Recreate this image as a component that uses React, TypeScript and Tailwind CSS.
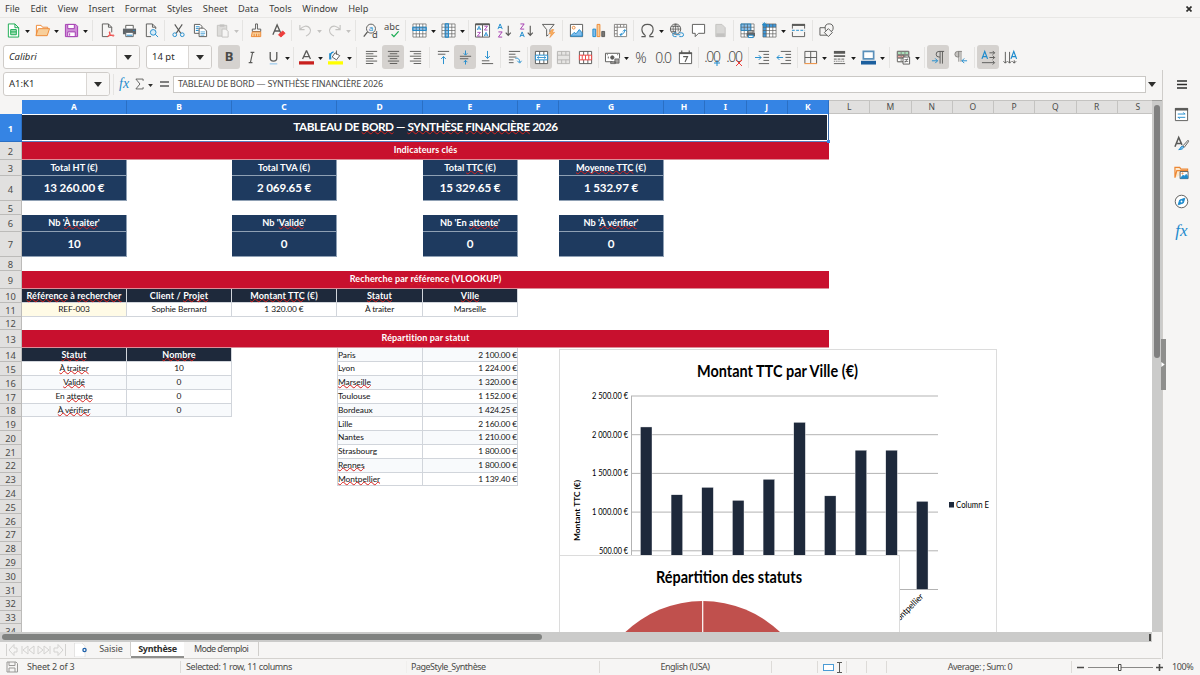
import type { ReactNode } from "react";
import clsx from "clsx";

const DARK = "#5a5a58";
const GREY = "#858380";
const BLUE = "#1e8bcd";
const ORANGE = "#ed8733";
const RED = "#ed3d3b";
const PURPLE = "#a33ab0";
const OFF = "#c3c2c0";

const menus = ["File", "Edit", "View", "Insert", "Format", "Styles", "Sheet", "Data", "Tools", "Window", "Help"];

const page = <path d="M3.5 1.5h6l3 3v10h-9zM9.5 1.5v3h3" />;
const gridBack = <path d="M1 1h14v14H1z" fill="#fff" stroke="none" />;
const gridLines = <path d="M1 1h14v14H1zM1 4.500h14M1 8h14M1 11.500h14M4.500 1v14M8 1v14M11.500 1v14" strokeWidth=".7" />;

// every drawing lives in a 16x16 box, stroked with DARK unless it says otherwise
const icons: Record<string, ReactNode> = {
  new: (
    <>
      <path d="M2.5 1h7l4 4v10h-11zM9.5 1v4h4" stroke="#18ab50" fill="#fff" />
      <path d="M5 7h6v5.500H5zM5 9.500h6" stroke="#18ab50" fill="#a5dfb9" />
    </>
  ),
  open: (
    <>
      <path d="M1.500 13V2.500h5l1.500 2h5.500V6" stroke={ORANGE} fill="#fff" />
      <path d="M1 13.500 3.500 6h12L13 13.500z" stroke={ORANGE} fill="#f8cf9b" />
    </>
  ),
  save: (
    <>
      <path d="M1.500 1.500h11l2 2v11h-13z" stroke={PURPLE} fill="#cf8fd8" />
      <path d="M4 1.500h7v4.500H4zM4 9.500h8v5H4z" stroke={PURPLE} fill="#fff" />
      <path d="M6 11v2.500" stroke={PURPLE} />
    </>
  ),
  pdf: (
    <>
      <path d="M2.500 1h6.500l3.500 3.500v5.500M2.500 1v13.500h6M9 1v3.500h3.500" />
      <path d="M8 15c2-2 3-4 2.500-5.500-.7-.7-1 1 .5 2.500s3.500 2.500 4 1.500-3-.7-7 .7" stroke={RED} />
    </>
  ),
  print: (
    <>
      <path d="M4 6V2.500h8V6" fill="#fff" />
      <path d="M1 6h14v6H1z" fill="#5f6468" stroke="none" />
      <path d="M4 10h8v4.500H4z" fill="#fff" stroke="#5f6468" />
      <path d="M5 13h6M12 8h1.500" stroke={BLUE} />
    </>
  ),
  preview: (
    <>
      <path d="M2.500 1h6.500l3.500 3.500v2M2.500 1v13.500h5M9 1v3.500h3.500" />
      <circle cx="9.800" cy="10" r="3" stroke={BLUE} fill="#d8ecf8" />
      <path d="m12 12 3 3" stroke={BLUE} />
    </>
  ),
  cut: (
    <>
      <path d="M4 1.500 10.500 11M12 1.500 5.500 11" strokeWidth="1.200" />
      <circle cx="4" cy="12.500" r="2" stroke={BLUE} />
      <circle cx="12" cy="12.500" r="2" stroke={BLUE} />
    </>
  ),
  copy: (
    <>
      <path d="M1.500 1.500h6l2 2v7.500h-8z" fill="#fff" />
      <path d="M3 4h4M3 6h3M3 8h3" stroke={BLUE} />
      <path d="M6.500 5.500h5l3 3v6h-8z" fill="#fff" />
      <path d="M8 9.500h5M8 11.300h5M8 13h4" stroke={BLUE} strokeWidth=".7" />
    </>
  ),
  paste: (
    <>
      <path d="M2.500 2.500h10V14h-10z" stroke={OFF} fill="#dddcda" />
      <path d="M5 1.500h5v2.500H5z" fill={OFF} stroke="none" />
      <path d="M7.500 6.500h4l2.500 2.500v6h-6.500z" stroke={OFF} fill="#f6f5f4" />
    </>
  ),
  clone: (
    <>
      <path d="M7 1h2v5.500h3.500V9h-9V6.500H7z" fill="#fff" />
      <path d="M3.500 9.500h9v5h-10z" stroke={ORANGE} fill="#f8cf9b" />
      <path d="M5.500 11.500v3M8 11.500v3M10.500 11.500v3" stroke={ORANGE} />
    </>
  ),
  clear: (
    <>
      <path d="M2 12.500 6.500 2l4 9M4 8.500h5" strokeWidth="1.400" />
      <path d="m8 12.500 4.500-4 2.500 2.500-4.500 4z" fill={RED} stroke={RED} />
    </>
  ),
  undo: <path d="M2 2v5h5M2 7c3-4 8-5 10.500-1.500S12 12 8.500 14" stroke={OFF} strokeWidth="1.200" />,
  redo: <path d="M14 2v5H9M14 7c-3-4-8-5-10.500-1.500S4 12 7.500 14" stroke={OFF} strokeWidth="1.200" />,
  find: (
    <>
      <circle cx="8.500" cy="6" r="4.800" />
      <path d="m4.800 9.500-4 5" strokeWidth="1.400" />
      <text x="6" y="8.500" fontSize="8.500" fill={BLUE} stroke="none" fontFamily="Noto Sans">a</text>
      <text x="9.500" y="16" fontSize="10" fill="#4a4a48" stroke="none" fontFamily="Noto Sans">d</text>
    </>
  ),
  spell: (
    <>
      <text x="-1" y="7.500" fontSize="10" fill="#4a4a48" stroke="none" fontFamily="Noto Sans">abc</text>
      <path d="m7 12 2.500 2.500 5-5.500" stroke="#18ab50" strokeWidth="1.300" />
    </>
  ),
  row: (
    <>
      {gridBack}
      <path d="M1 4.500h14V8H1z" fill="#83beec" stroke="none" />
      {gridLines}
      <path d="M.700 4.500h14.600V8H.700z" stroke={BLUE} />
    </>
  ),
  col: (
    <>
      {gridBack}
      <path d="M4.500 1H8v14H4.500z" fill="#83beec" stroke="none" />
      {gridLines}
      <path d="M4.500.700H8v14.600H4.500z" stroke={BLUE} />
    </>
  ),
  sort: (
    <>
      <path d="M.500 1h15v14H.500zM8 2v13" fill="#fff" />
      <path d="M.500 1.500h15" strokeWidth="1.800" />
      <path d="m2.300 7.500 2-4 2 4M9.800 14l2-4 2 4M3 6.300h2.600M10.500 12.800h2.600" stroke={BLUE} strokeWidth=".9" />
      <path d="M2.500 10h3.300l-3.300 4h3.300M10 3.500h3.300L10 7.500h3.300" stroke={PURPLE} strokeWidth=".9" />
    </>
  ),
  az: (
    <>
      <path d="m1 6.500 2.300-5.500 2.300 5.500M1.800 4.800h3" stroke={BLUE} />
      <path d="M1.500 9.500h4l-4 5.500h4" stroke={PURPLE} />
      <path d="M12 3v10M9.300 10.300l2.700 3 2.700-3" strokeWidth="1.200" />
    </>
  ),
  za: (
    <>
      <path d="M1.500 1h4l-4 5.500h4" stroke={PURPLE} />
      <path d="m1 15 2.300-5.500L5.600 15M1.800 13.200h3" stroke={BLUE} />
      <path d="M12 3v10M9.300 10.300l2.700 3 2.700-3" strokeWidth="1.200" />
    </>
  ),
  filter: (
    <>
      <path d="M1.500 1.500h12.500L9.500 7v3M1.500 1.500 6 7v7l2-1.500" />
      <path d="m11.500 7-3 4.500h2.500L9.500 15.500l5-5.500h-2.500l1.500-3z" fill="#f8b060" stroke={ORANGE} strokeWidth=".6" />
    </>
  ),
  image: (
    <>
      <path d="M1.500 1.500h13v13h-13z" fill="#fff" />
      <circle cx="5" cy="5" r="1.500" stroke={ORANGE} />
      <path d="m2 13.500 3.500-3.500 2 1.500L11 7l3 3.500v3.500H2z" fill="#83beec" stroke={BLUE} />
    </>
  ),
  chart: (
    <>
      <path d="M2 6.500h3v8H2z" fill="#83beec" stroke={BLUE} />
      <path d="M6.500 1.500h3v13h-3z" fill="#f8cf9b" stroke={ORANGE} />
      <path d="M11.500 9h3v5.500h-3z" fill="#797774" />
    </>
  ),
  pivot: (
    <>
      <path d="M1.500 1.500h13v13h-13z" stroke={GREY} fill="#fff" />
      <path d="M1.500 4.500h13M4.500 1.500v13M8 1.500v3M11.500 1.500v3M1.500 8h3M1.500 11.500h3" stroke={GREY} />
      <path d="M7.500 12.500c3 0 5-2 5-5M10.500 9l2-2 2 2M9.500 10.500l-2 2 2 2" stroke={BLUE} />
    </>
  ),
  omega: <path d="M1.500 14.500h4v-1.300C3 11.500 2 9.500 2 7c0-3.500 2.500-5.500 6-5.500S14 3.500 14 7c0 2.500-1 4.500-3.500 6.200v1.300h4" strokeWidth="1.200" />,
  link: (
    <>
      <circle cx="7" cy="6.500" r="5.500" />
      <path d="M7 1v10M1.500 6.500h11M2.500 3.800h9M2.500 9h5M7 1c-3.500 3-3.500 7.500 0 11M7 1c2.800 2.500 3.300 5 2.700 8" strokeWidth=".8" />
      <path d="M8 10.500H6a2 2 0 0 0 0 4h2M11 10.500h2.500a2 2 0 0 1 0 4H11M7.500 12.500h4.500" stroke={BLUE} />
    </>
  ),
  comment: <path d="M1.500 1.500h13v9.500H8l-3.500 3.500V11h-3z" fill="#fff" />,
  header: (
    <>
      <path d="M3 1.500h6.500l3.500 3.500v9.500H3z" stroke={OFF} fill="#d8d7d5" />
      <path d="M3.500 11h9v3.500h-9z" stroke="none" fill={OFF} />
    </>
  ),
  printArea: (
    <>
      {gridBack}
      <path d="M1 1h10.500v7H1z" fill="#83beec" stroke="none" />
      {gridLines}
      <path d="M1 1h10.500v7H1z" stroke={BLUE} strokeWidth=".8" />
      <path d="M8.500 8.500h5.500v2h-5.500z" fill="#fff" />
      <path d="M7 10.500h9v3.500H7z" fill="#5f6468" stroke="none" />
      <path d="M9 13h5v2.500H9z" fill="#fff" stroke={BLUE} />
    </>
  ),
  freeze: (
    <>
      {gridBack}
      <path d="M1 1h14v3.500H4.500V15H1z" fill="#3e9be0" stroke="none" />
      {gridLines}
      <path d="M2.500-1v5M0 1.500h5M.800-.200l3.400 3.400M4.200-.200.800 3.200" stroke={BLUE} strokeWidth=".8" />
    </>
  ),
  split: (
    <>
      <path d="M1.500 6V2h13v4M1.500 9.500v5h13v-5" />
      <path d="M1 2h14" strokeWidth="2.200" />
      <path d="M1 7.800h14" stroke={BLUE} strokeDasharray="3 1.500" />
    </>
  ),
  shapes: (
    <>
      <path d="M1 5h8v8H1z" />
      <circle cx="10.800" cy="5.200" r="4.300" fill="#f6f5f4" />
      <path d="m10 6 4.200 4.200-4.200 4.300-4.300-4.300z" fill="#f6f5f4" />
    </>
  ),
  italic: <path d="M7 2.500h4M5 13.500h4M9.200 2.500 6.800 13.500" strokeWidth="1.200" />,
  underline: (
    <>
      <path d="M4.500 2v6.500c0 4.500 7 4.500 7 0V2" strokeWidth="1.400" />
      <path d="M4 14.800h8" stroke="#83beec" />
    </>
  ),
  fontColor: (
    <>
      <path d="m3.800 9.500 4-8.500h.4l4 8.500M5.200 7h5.600" strokeWidth="1.400" />
      <path d="M0 12h16v3.500H0z" fill="#c9211e" stroke="none" />
    </>
  ),
  highlight: (
    <>
      <path d="m7.500 3 5 3-3.500 4.500-4.500-3zM9 .500v4.500" fill="#fff" />
      <path d="M3 9.500C2 6 2.500 2.500 6 2M2 3.500v6h1.500" stroke={BLUE} strokeWidth="1.500" />
      <path d="M0 12h16v3.500H0z" fill="#ffff00" stroke="none" />
    </>
  ),
  alignLeft: <path d="M2 1.500h12M2 4h8M2 6.600h12M2 9.200h8M2 11.800h12M2 14.400h8" />,
  alignCenter: <path d="M2 1.500h12M4 4h8M2 6.600h12M4 9.200h8M2 11.800h12M4 14.400h8" />,
  alignRight: <path d="M2 1.500h12M6 4h8M2 6.600h12M6 9.200h8M2 11.800h12M6 14.400h8" />,
  alignTop: (
    <>
      <path d="M2 1.500h12M2 4.500h8" />
      <path d="M8 15V7M5.500 9.500 8 7l2.500 2.500" stroke={BLUE} />
    </>
  ),
  alignMiddle: (
    <>
      <path d="M2 6.700h12M2 9.300h9" />
      <path d="M8 .500V5M6 3.500l2 2 2-2M8 15.500V11M6 13l2-2 2 2" stroke={BLUE} />
    </>
  ),
  alignBottom: (
    <>
      <path d="M2 14.500h12M2 11.500h8" />
      <path d="M8 1v8M5.500 6.500 8 9l2.500-2.500" stroke={BLUE} />
    </>
  ),
  wrap: (
    <>
      <path d="M2 1.500h12M2 4.500h7M2 7.500h8M2 10.500h5M2 13.500h5" />
      <path d="M9 9c3-1 4.500 1 4.500 4M11 11.500l2.500 2.500 2-2.500" stroke={BLUE} />
    </>
  ),
  merge: (
    <>
      <path d="M1.500 1.500h13v13h-13zM6 1.500v4M10.500 1.500v4M6 10.500v4M10.500 10.500v4" fill="#fff" />
      <path d="M1.500 5.500h13v5h-13z" fill="#fff" stroke={BLUE} />
      <path d="M3.500 8h9M5 6.800 3.500 8 5 9.200M11 6.800 12.500 8 11 9.200" stroke={BLUE} strokeWidth=".9" />
    </>
  ),
  unmerge: <path d="M1.500 1.500h13v13h-13zM1.500 5.500h13M1.500 10.500h13M6 1.500v4M10.500 1.500v4M6 10.500v4M10.500 10.500v4" stroke="#b5b4b2" fill="#e6e5e3" />,
  splitCells: (
    <>
      <path d="M1.500 1.500h13v13h-13zM6 1.500v4M10.500 1.500v4M6 10.500v4M10.500 10.500v4" fill="#fff" />
      <path d="M1.500 5.500h13v5h-13zM4.500 5.500v5M8 5.500v5M11.500 5.500v5" stroke={RED} fill="#fff" />
    </>
  ),
  currency: (
    <>
      <path d="M8 12.500H.500v-9h15V9" fill="#fff" />
      <circle cx="7.800" cy="8" r="1.800" fill={DARK} />
      <path d="M3.500 7v2M2 5h1M13 5h1" />
      <path d="M10.500 9.500h4.500v4.500h-4.500zM6 12.500h5v2H6z" fill="#a3a19f" strokeWidth=".8" />
    </>
  ),
  date: (
    <>
      <path d="M1.500 3h13v11.500h-13z" fill="#fff" />
      <path d="M1 3.500h14" strokeWidth="1.800" />
      <path d="M4 .500v3M12 .500v3M5.500 7h4.700L7.500 12.700" strokeWidth="1.200" />
    </>
  ),
  indent: (
    <>
      <path d="M4 1.500h11M9 4.700h6M9 7.900h6M9 11.100h6M4 14.500h11" />
      <path d="M0 8h6.500M4 5.500 6.500 8 4 10.500" stroke={BLUE} />
    </>
  ),
  outdent: (
    <>
      <path d="M4 1.500h11M9 4.700h6M9 7.900h6M9 11.100h6M4 14.500h11" />
      <path d="M6.500 8H0M2.500 5.500 0 8l2.500 2.500" stroke={BLUE} />
    </>
  ),
  border: (
    <>
      <path d="M2 14V1.500h12.500V14M8.200 1.500v12.500M2 8h12.500" />
      <path d="M1.500 14.500h13.500" stroke={ORANGE} />
    </>
  ),
  borderStyle: (
    <>
      <path d="M2 2.500h12" strokeWidth="3" />
      <path d="M2 6.500h12" strokeWidth="1.800" />
      <path d="M2 9.700h12" strokeDasharray="3 1" />
      <path d="M2 12h12" strokeDasharray="1 1" />
      <path d="M2 14.500h12" />
    </>
  ),
  borderColor: (
    <>
      <path d="M2.500 1.500h11v8h-11z" stroke="#5a90ba" strokeWidth="1.800" fill="#fff" />
      <path d="M0 11.500h16v4H0z" fill="#1c5f9e" stroke="none" />
    </>
  ),
  conditional: (
    <>
      <path d="M1.500 1.500h12v11h-12z" fill="#fff" />
      <path d="M1.500 1.500h12v4h-12z" fill="#a9dfb9" />
      <path d="M1.500 5.500h7v3h-7z" fill="#f2a5a3" />
      <path d="M1.500 1.500h12v11h-12zM1.500 5h12M1.500 8.500h12M5.500 1.500v11M9.500 1.500v11" stroke={GREY} />
      <path d="M7.500 7.500h7v7.500h-7z" fill="#fff" />
      <path d="M9 10.200h4M9 12.200h4M12.500 9l-3 4.500" strokeWidth=".8" />
    </>
  ),
  ltr: (
    <>
      <path d="M14 1.500H8.500a3 3 0 0 0 0 6h1M9.700 1.500v13M12.200 1.500v13" />
      <path d="M1 11.500h6M4.500 9 7 11.500 4.500 14" stroke={BLUE} />
    </>
  ),
  rtl: (
    <>
      <path d="M9.500 1.500H5a3 3 0 0 0 0 6h1.200V1.500" fill="#c5c3c0" stroke={GREY} />
      <path d="M6.200 1.500v11M8.500 1.500v11" stroke={GREY} />
      <path d="M15 11.500H9.500M12 9l-2.500 2.500L12 14" stroke={BLUE} />
    </>
  ),
  textH: (
    <>
      <path d="M1 9.500 4 1.500l3 8M2 7h4" stroke={BLUE} strokeWidth="1.300" />
      <path d="M9 3h5.500M9 8h5.500M1 13.500h13M12.500 1l2 2-2 2M12.500 6l2 2-2 2M12.500 11.500l2 2-2 2" />
    </>
  ),
  textV: (
    <>
      <path d="m8.500 9.500 3-8 3 8M9.500 7h4" stroke={BLUE} strokeWidth="1.300" />
      <path d="M2.500 2v12M7 2v12M12 11v3M.500 12l2 2 2-2M5 12l2 2 2-2M10 12l2 2 2-2" />
    </>
  ),
  properties: (
    <>
      <path d="M1.500 1.500h13v13h-13z" fill="#fff" />
      <path d="M1 2.500h14" strokeWidth="2.500" />
      <path d="M4 7.500h8M4 11h8M10 5.800l1.500 1.700M6 12.500 4.500 11" stroke={BLUE} />
    </>
  ),
  styles: (
    <>
      <path d="M1 11.500 5 1.500l3.500 8M2.500 8H7" strokeWidth="1.600" />
      <path d="m15 4.500-5.500 6 1.500 1.500L15.500 6z" />
      <path d="M5 14.500c2 0 1.500-3.500 3.800-3.500 2.700.500 1.500 3.500-3.800 3.500z" fill="#83beec" stroke={BLUE} />
    </>
  ),
  gallery: (
    <>
      <path d="M1 13.500v-11h5l1.500 2h7V7M1 13.500 3 6h12" stroke={ORANGE} fill="#fde8cc" strokeWidth="1.300" />
      <path d="M6.500 7h8.500v7.500H6.500z" fill="#fff" />
      <path d="m7 14 2.500-3 1.500 1 2-2 1.500 2v2z" fill={BLUE} stroke={BLUE} />
      <circle cx="9" cy="9" r=".6" stroke={ORANGE} />
    </>
  ),
  navigator: (
    <>
      <circle cx="8" cy="8" r="6.700" fill="#fff" />
      <path d="m11.500 4.500-1.500 5-5.500 2 1.500-5z" fill={BLUE} stroke={BLUE} />
      <circle cx="8" cy="8" r="1" fill="#fff" stroke="none" />
    </>
  ),
};

interface ToolProps {
  id: string;
  menu?: boolean;
  active?: boolean;
  disabled?: boolean;
}

// short-hand: "id" plain, "id▾" with menu, "id!" pressed, "|" separators of growing width
const standardBar = "new▾ open▾ save▾ ||| pdf print preview | cut copy paste▾ | clone clear | undo▾ redo▾ ||| find spell | row▾ col▾ | sort az za filter || image chart pivot | omega▾ link comment header | printArea freeze▾ split || shapes";
const formatBar = "bold! italic underline▾ . fontColor▾ highlight▾ ||| alignLeft alignCenter! alignRight || alignTop alignMiddle! alignBottom | wrap | merge! unmerge splitCells | currency▾ percent number date | addDecimal deleteDecimal || indent outdent . border▾ borderStyle▾ borderColor▾ || conditional▾ || ltr! rtl || textH! textV";

const disabledIds = ["paste", "undo", "redo"];

const Icon = ({ id, className }: { id: string; className?: string }) => (
  <svg viewBox="0 0 16 16" className={clsx("overflow-visible shrink-0", className ?? "w-[15px] h-[15px]")} fill="none" stroke={DARK}>
    {icons[id] ?? page}
  </svg>
);

const Glyph = ({ id }: { id: string }) => {
  switch (id) {
    case "bold":
      return <b className="text-[13px]">B</b>;
    case "percent":
      return <span className="text-[14px] font-light">%</span>;
    case "number":
      return <span className="text-[14px] font-light tracking-[-1.3px]">0.0</span>;
    case "addDecimal":
    case "deleteDecimal":
      return (
        <span className="relative text-[14px] leading-[16px] font-light tracking-[-1.3px]">
          .00
          <svg viewBox="0 0 6 6" className="absolute right-0 -bottom-[1px] w-[6px] h-[6px] overflow-visible" stroke={id === "addDecimal" ? BLUE : RED}>
            <path d={id === "addDecimal" ? "M3 0v6M0 3h6" : "m0 0 6 6M6 0 0 6"} />
          </svg>
        </span>
      );
    default:
      return <Icon id={id} />;
  }
};

const Arrow = ({ className }: { className?: string }) => (
  <svg viewBox="0 0 8 5" className={clsx("shrink-0", className)} fill="currentColor">
    <path d="M0 0h8L4 5z" />
  </svg>
);

const Tool = ({ id, menu, active, disabled }: ToolProps) => (
  <div className="flex items-center shrink-0">
    <div className={clsx("flex w-[22px] h-[24px] items-center justify-center rounded-[3px] text-[#4a4a48]", active && "bg-[#d5d2cf]")}>
      <Glyph id={id} />
    </div>
    {menu && (
      <div className={clsx("w-[7px] flex justify-center", disabled ? "text-[#c3c2c0]" : "text-[#1b1b1a]")}>
        <Arrow className="w-[5px] h-[3px] mt-[2px]" />
      </div>
    )}
  </div>
);

const sepWidths: Record<string, string> = { ".": "w-[4px]", "|": "w-[5px]", "||": "w-[6px]", "|||": "w-[7px]" };

const ToolRow = ({ spec }: { spec: string }) => (
  <>
    {spec.split(" ").map((token, i) => {
      if (sepWidths[token]) {
        return (
          <div key={i} className={clsx("flex justify-center shrink-0", sepWidths[token])}>
            <div className="w-px h-[21px] bg-[#e5e4e2]" />
          </div>
        );
      }
      const id = token.replace(/[▾!]/, "");
      return <Tool key={i} id={id} menu={token.endsWith("▾")} active={token.endsWith("!")} disabled={disabledIds.includes(id)} />;
    })}
  </>
);

const Combo = ({ value, className, arrowClass, italic }: { value: string; className: string; arrowClass: string; italic?: boolean }) => (
  <div className={clsx("flex h-[24px] rounded-[3px] border border-[#cfccc9] bg-white text-[9.5px] text-[#2e2e2c] overflow-hidden shrink-0", className)}>
    <div className={clsx("flex-1 flex items-center pl-[5px] whitespace-nowrap", italic && "italic")}>{value}</div>
    <div className={clsx("flex items-center justify-center border-l border-[#dad7d4] bg-[#f8f7f6]", arrowClass)}>
      <Arrow className="w-[8px] h-[5px]" />
    </div>
  </div>
);

// words between asterisks are unknown to the spell checker
const Spelled = ({ text }: { text: string }) => (
  <span>
    {text.split("*").map((part, i) =>
      i % 2 ? (
        <span key={i} className="underline decoration-wavy decoration-[#d8201c] decoration-[0.7px] underline-offset-[-1px] [text-decoration-skip-ink:none]">
          {part}
        </span>
      ) : (
        part
      )
    )}
  </span>
);

type Kind = "title" | "band" | "kpi" | "kpiValue" | "head" | "body" | "city" | "amount" | "input";

interface Cell {
  col: number;
  row: number;
  span?: number;
  kind: Kind;
  text: string;
  shaded?: boolean;
}

const kindClass: Record<Kind, string> = {
  title: "justify-center bg-[#1e293b] text-white font-bold text-[11.8px] tracking-[-0.46px] pb-[2px] border-y border-white",
  band: "justify-center bg-[#c8102e] text-white font-bold text-[9px] tracking-[0.1px] pb-[2px] border-b border-[#dd8c98]",
  kpi: "justify-center bg-[#1e3a5f] text-white font-bold text-[9.2px] border-r border-b border-[#8fa0b4]",
  kpiValue: "justify-center bg-[#1e3a5f] text-white font-bold text-[11.6px] tracking-[-0.15px] border-r border-b border-[#8fa0b4]",
  head: "justify-center bg-[#1e293b] text-white font-bold text-[9px] tracking-[0.12px] border-r border-b border-[#d1d5db]",
  body: "justify-center text-[#141414] text-[8.4px] tracking-[-0.1px] border-r border-b border-[#d1d5db]",
  input: "justify-center bg-[#fffbe6] text-[#141414] text-[8.4px] tracking-[-0.1px] border-r border-b border-[#d1d5db]",
  city: "justify-start text-[#141414] text-[8.4px] tracking-[-0.05px] border-x border-b border-[#d1d5db]",
  amount: "justify-end text-[#141414] text-[8.4px] tracking-[-0.15px] border-r border-b border-[#d1d5db]",
};

const kpis = [
  { col: 1, top: "Total HT (€)", value: "13 260.00 €", bottom: "Nb '*À traiter*'", count: "10" },
  { col: 3, top: "Total TVA (€)", value: "2 069.65 €", bottom: "Nb '*Validé*'", count: "0" },
  { col: 5, top: "Total *TTC* (€)", value: "15 329.65 €", bottom: "Nb 'En *attente*'", count: "0" },
  { col: 7, top: "*Moyenne TTC* (€)", value: "1 532.97 €", bottom: "Nb '*À vérifier*'", count: "0" },
];

const cities = [
  { label: "Paris", amount: 2100 },
  { label: "Lyon", amount: 1224 },
  { label: "*Marseille*", amount: 1320 },
  { label: "Toulouse", amount: 1152 },
  { label: "Bordeaux", amount: 1424.25 },
  { label: "Lille", amount: 2160 },
  { label: "Nantes", amount: 1210 },
  { label: "Strasbourg", amount: 1800 },
  { label: "*Rennes*", amount: 1800 },
  { label: "*Montpellier*", amount: 1139.4 },
];

const statuses = [
  ["*À traiter*", "10"],
  ["*Validé*", "0"],
  ["En *attente*", "0"],
  ["*À vérifier*", "0"],
];

const euros = (n: number) => n.toFixed(2).replace(/^(\d)(\d{3})/, "$1 $2") + " €";

const cells: Cell[] = [
  { col: 1, row: 1, span: 11, kind: "title", text: "TABLEAU DE *BORD* — *SYNTHÈSE* *FINANCIÈRE* 2026" },
  { col: 1, row: 2, span: 11, kind: "band", text: "*Indicateurs clés*" },
  ...kpis.flatMap((k): Cell[] => [
    { col: k.col, row: 3, kind: "kpi", text: k.top },
    { col: k.col, row: 4, kind: "kpiValue", text: k.value },
    { col: k.col, row: 6, kind: "kpi", text: k.bottom },
    { col: k.col, row: 7, kind: "kpiValue", text: k.count },
  ]),
  { col: 1, row: 9, span: 11, kind: "band", text: "*Recherche* par *référence* (VLOOKUP)" },
  ...["*Référence* à *rechercher*", "Client / *Projet*", "*Montant TTC* (€)", "*Statut*", "*Ville*"].map(
    (text, i): Cell => ({ col: i + 1, row: 10, kind: "head", text })
  ),
  ...["REF-003", "Sophie Bernard", "1 320.00 €", "À traiter", "Marseille"].map(
    (text, i): Cell => ({ col: i + 1, row: 11, kind: i === 0 ? "input" : "body", text })
  ),
  { col: 1, row: 13, span: 11, kind: "band", text: "*Répartition* par *statut*" },
  { col: 1, row: 14, kind: "head", text: "*Statut*" },
  { col: 2, row: 14, kind: "head", text: "*Nombre*" },
  ...statuses.flatMap(([name, count], i): Cell[] => [
    { col: 1, row: 15 + i, kind: "body", text: name, shaded: i % 2 === 1 },
    { col: 2, row: 15 + i, kind: "body", text: count, shaded: i % 2 === 1 },
  ]),
  ...cities.flatMap((c, i): Cell[] => [
    { col: 4, row: 14 + i, kind: "city", text: c.label, shaded: i % 2 === 0 },
    { col: 5, row: 14 + i, kind: "amount", text: euros(c.amount), shaded: i % 2 === 0 },
  ]),
];

const columns = "ABCDEFGHIJKLMNOPQRS".split("");
const rows = Array.from({ length: 34 }, (_, i) => i + 1);

const BarChart = () => (
  <svg width="438" height="283" className="absolute left-[559px] top-[249px] font-[Lato]" fontSize="8">
    <rect x=".5" y=".5" width="437" height="400" fill="#fff" stroke="#dcdcdc" />
    <text x="138" y="27.500" fontSize="16.200" fontWeight="700" textLength="161" lengthAdjust="spacingAndGlyphs">
      Montant TTC par Ville (€)
    </text>
    <text transform="translate(20.500 192) rotate(-90)" fontSize="8" fontWeight="700" textLength="61" lengthAdjust="spacingAndGlyphs">
      Montant TTC (€)
    </text>
    {[2500, 2000, 1500, 1000, 500, 0].map((v, i) => {
      const y = 47 + i * 38.7;
      return (
        <g key={v}>
          <path d={`M72 ${y}H379`} stroke="#b3b3b3" />
          {v > 0 && (
            <text x="69" y={y + 2.8} textAnchor="end" fontSize="8.800" textLength={v > 500 ? 36 : 29} lengthAdjust="spacingAndGlyphs">
              {euros(v)}
            </text>
          )}
        </g>
      );
    })}
    <path d="M72.500 47v194" stroke="#b3b3b3" />
    {cities.map((c, i) => {
      const h = (c.amount / 500) * 38.7;
      return <rect key={c.label} x={81.4 + i * 30.67} y={240.5 - h} width="11.600" height={h} fill="#1e293b" stroke="#fff" strokeWidth=".4" />;
    })}
    <text transform="translate(365 248) rotate(-45)" textAnchor="end" fontSize="8.800" textLength="42" lengthAdjust="spacingAndGlyphs">
      Montpellier
    </text>
    <rect x="390" y="153" width="5" height="5.500" fill="#1e293b" />
    <text x="397" y="158.500" fontSize="9.400" textLength="33" lengthAdjust="spacingAndGlyphs">
      Column E
    </text>
  </svg>
);

const PieChart = () => (
  <svg width="341" height="77" className="absolute left-[559px] top-[455px] font-[Lato]">
    <rect x=".5" y=".5" width="340" height="200" fill="#fff" stroke="#dcdcdc" />
    <text x="97" y="28" fontSize="16.200" fontWeight="700" textLength="146" lengthAdjust="spacingAndGlyphs">
      Répartition des statuts
    </text>
    <circle cx="143.700" cy="158" r="112" fill="#c0504d" />
    <path d="M143.700 46v112" stroke="#fff" strokeWidth="1.200" />
  </svg>
);

const Sheet = () => (
  <div className="relative w-[1152px] h-[532px] overflow-hidden bg-white">
    <div className="grid w-max grid-cols-[22px_105px_105px_105px_86px_95px_41px_105px_repeat(12,41.25px)] grid-rows-[14px_28px_17.6px_16.4px_25.5px_13.800px_16.400px_25.500px_13.800px_18px_13.800px_13.800px_13.800px_18px_repeat(21,13.800px)]">
      <div className="bg-[#f6f5f4]" />
      {columns.map((c, i) => (
        <div
          key={c}
          style={{ gridColumn: i + 2, gridRow: 1 }}
          className={clsx(
            "flex items-center justify-center text-[8.5px] border-r border-t",
            i < 11 ? "bg-[#3584e4] text-white font-bold border-r-[#2a6fc4] border-t-[#3584e4]" : "bg-[#e1e0df] text-[#4b4b49] border-[#c4c3c1] border-b border-b-[#c4c3c1]"
          )}
        >
          {c}
        </div>
      ))}
      {rows.map((r) => (
        <div
          key={r}
          style={{ gridColumn: 1, gridRow: r + 1 }}
          className={clsx(
            "flex items-center justify-center pt-[2px] text-[9.3px] leading-none border-b border-r",
            r === 1 ? "bg-[#3584e4] text-white font-bold border-[#2a6fc4]" : "bg-[#e1e0df] text-[#4b4b49] border-[#bcbbb9]"
          )}
        >
          {r}
        </div>
      ))}
      {cells.map((cell) => (
        <div
          key={`${cell.col}-${cell.row}`}
          style={{ gridColumn: `${cell.col + 1} / span ${cell.span ?? 1}`, gridRow: cell.row + 1 }}
          className={clsx("flex items-center font-[Lato] whitespace-nowrap leading-none min-h-0", kindClass[cell.kind], cell.shaded && "bg-[#f8fafc]")}
        >
          <Spelled text={cell.text} />
        </div>
      ))}
    </div>
    <BarChart />
    <PieChart />
    {/* selection outline and its fill handle */}
    <div className="absolute left-[22px] top-[40px] w-[807px] h-[2px] border-t border-white bg-[#5b7fc0]" />
    <div className="absolute left-[827px] top-[14px] w-[2px] h-[28px] border-l border-white bg-[#3465a4]" />
    <div className="absolute left-[827px] top-[40px] w-[3px] h-[3px] bg-[#3584e4]" />
  </div>
);

const FormulaBar = () => (
  <div className="flex h-[30px] w-[1161px] items-center pl-[3px] pb-[2px] shrink-0">
    <Combo value="A1:K1" className="w-[107px]" arrowClass="w-[23px]" />
    <div className="ml-[3px] h-[21px] w-px bg-[#e5e4e2]" />
    <span className="ml-[5px] w-[11px] font-['Liberation_Serif'] italic text-[14px] leading-none text-[#1e8bcd]">fx</span>
    <svg viewBox="0 0 10 12" className="ml-[5px] w-[9px] h-[12px]" fill="none" stroke={DARK}>
      <path d="M9 2.500V.500H1L5.500 6 1 11.500h8v-2" />
    </svg>
    <Arrow className="ml-[4px] w-[5px] h-[3px] mt-[2px]" />
    <svg viewBox="0 0 9 6" className="ml-[7px] w-[9px] h-[6px]" stroke={DARK} strokeWidth="1.500">
      <path d="M0 1h9M0 5h9" />
    </svg>
    <div className="ml-[4px] flex h-[17px] flex-1 items-center border border-[#cac8c5] bg-white pl-[4px] text-[9px] tracking-[-0.2px] text-[#4b4b49]">
      TABLEAU DE BORD — SYNTHÈSE FINANCIÈRE 2026
    </div>
    <Arrow className="ml-[2px] mr-[5px] w-[8px] h-[5px]" />
  </div>
);

const SheetTabs = () => (
  <div className="flex h-[17px] w-[1161px] items-stretch border-b border-[#d4d2cf] text-[9px] text-[#4b4b49] shrink-0">
    <svg viewBox="0 0 62 12" className="ml-[5px] mt-[2px] w-[62px] h-[12px] shrink-0" fill="none" stroke="#d3d2d0">
      <path d="M1.500 0v12M9 .500 4 6l5 5.500V8h3V4H9zM17 2v8M23 2l-5 4 5 4zM29 2l-5 4 5 4zM33 2l5 4-5 4zM39 2l5 4-5 4zM45 2v8M53 .500 58 6l-5 5.500V8h-4V4h4zM60.500 0v12" />
    </svg>
    <svg viewBox="0 0 13 14" className="ml-[7px] mt-px w-[13px] h-[14px] shrink-0" fill="#fff">
      <path d="M.500 0h7.500l3 3v11H.500z" stroke="#cfcecc" strokeWidth=".5" />
      <circle cx="10.500" cy="7" r="1.600" stroke="#1c5fa8" strokeWidth="1.300" />
    </svg>
    <div className="ml-[2px] flex w-[42px] h-[14px] items-center justify-center border-r border-[#d0cecb] tracking-[-0.1px] pl-[3px]">Saisie</div>
    <div className="flex w-[53px] items-center justify-center border-b-2 border-[#8f8f8d] bg-white font-bold text-[#2e2e2c] tracking-[-0.3px]">Synthèse</div>
    <div className="flex w-[75px] h-[14px] items-center justify-center border-r border-[#d0cecb] tracking-[-0.65px]">Mode d'emploi</div>
  </div>
);

const StatusBar = () => (
  <div className="flex h-[16px] items-center text-[9px] tracking-[-0.2px] text-[#4b4b49] shrink-0">
    <svg viewBox="0 0 12 12" className="ml-[6px] w-[12px] h-[12px]" fill="none" stroke="#999896">
      <path d="M1 1h9l1.500 1.500v8.500H1zM3 1v3.500h6V1M3 11V7h6v4" />
    </svg>
    <div className="ml-[9px] w-[153px]">Sheet 2 of 3</div>
    <div className="w-[6px] h-[12px] border-l border-[#dddbd8]" />
    <div className="w-[220px] tracking-[-0.4px]">Selected: 1 row, 11 columns</div>
    <div className="w-[5px] h-[12px] border-l border-[#f0efed]" />
    <div className="w-[188px] tracking-[-0.5px]">PageStyle_Synthèse</div>
    <div className="w-[171px] h-[12px] border-l border-[#dddbd8] flex items-center justify-center tracking-[-0.5px]">English (USA)</div>
    <div className="ml-px w-[46px] h-[12px] border-l border-[#dddbd8]" />
    <div className="w-[30px] h-[12px] border-x border-[#dddbd8] flex items-center justify-center gap-[3px]">
      <div className="w-[11px] h-[7px] border border-[#4a9bd5] bg-white" />
      <svg viewBox="0 0 5 11" className="w-[5px] h-[11px]" fill="none" stroke={DARK}>
        <path d="M0 .500h5M0 10.500h5M2.500 0v11" />
      </svg>
    </div>
    <div className="w-[20px] h-[12px] border-r border-[#dddbd8]" />
    <div className="w-[20px] h-[12px] border-r border-[#dddbd8]" />
    <div className="w-[185px] h-[12px] flex items-center justify-center border-r border-[#dddbd8] pl-[2px] tracking-[-0.5px]">Average: ; Sum: 0</div>
    <svg viewBox="0 0 86 12" className="ml-[5px] w-[86px] h-[12px] shrink-0" fill="none" stroke="#4a4a48">
      <path d="M0 6.500h7M79 6.500h7M82.500 3v7" strokeWidth="1.600" />
      <path d="M11 6.500h65" stroke="#8a8987" />
      <path d="M41.500 3.500h2.500v6h-2.500z" fill="#fff" />
    </svg>
    <div className="ml-[9px] tracking-[-0.4px]">100%</div>
  </div>
);

const Sidebar = () => (
  <div className="flex w-[38px] flex-col items-center border-l border-[#cfcdca] pt-[7px]">
    <svg viewBox="0 0 10 10" className="w-[10px] h-[15px]" stroke="#2e2e2c" strokeWidth="1.300">
      <path d="M0 1.500h10M0 5h10M0 8.500h10" />
    </svg>
    <div className="mt-[15px] flex flex-col items-center gap-[14px]">
      {["properties", "styles", "gallery", "navigator"].map((id) => (
        <Icon key={id} id={id} className="w-[15px] h-[15px]" />
      ))}
      <span className="font-['Liberation_Serif'] italic text-[17px] leading-[16px] text-[#1e8bcd]">fx</span>
    </div>
  </div>
);

const App = () => {
  return (
    <div className="flex h-[675px] w-[1200px] flex-col overflow-hidden bg-[#f6f5f4] font-['Noto_Sans',sans-serif] text-[#2e2e2c] select-none">
      {/* Menu bar */}
      <div className="flex h-[17px] items-center pl-[5px] pr-[8px] text-[9.3px] shrink-0 text-[#3d3d3b]">
        <div className="flex gap-[10.550px]">
          {menus.map((m) => (
            <span key={m}>{m}</span>
          ))}
        </div>
        <svg viewBox="0 0 6 6" className="ml-auto w-[6px] h-[6px]" stroke="#2e2e2c" strokeWidth="1.700">
          <path d="m.500.500 5 5M5.500.500l-5 5" />
        </svg>
      </div>
      <div className="flex h-[26px] items-center pl-[2px] pb-px border-t border-[#e8e7e5] shrink-0">
        <ToolRow spec={standardBar} />
      </div>
      <div className="flex h-[27px] items-center pl-[3px] pt-px shrink-0">
        <Combo value="Calibri" italic className="w-[137px]" arrowClass="w-[23px]" />
        <Combo value="14 pt" className="ml-[6px] mr-[6px] w-[66px]" arrowClass="w-[23px]" />
        <ToolRow spec={formatBar} />
      </div>

      <div className="flex flex-1 min-h-0">
        <div className="flex w-[1162px] flex-col shrink-0">
          <FormulaBar />
          <div className="flex h-[532px] shrink-0">
            <Sheet />
            <div className="relative w-[10px] bg-[#cbcbca] pt-[4px] border-t border-[#a0a09e]">
              <div className="mx-auto h-[253px] w-[6px] rounded-full bg-[#808080]" />
              {/* sidebar grip */}
              <div className="absolute left-[9px] top-[238px] z-10 flex h-[51px] w-[5px] items-center bg-[#8f8f8d] text-white">
                <svg viewBox="0 0 4 6" className="w-[4px] h-[5px]" fill="currentColor">
                  <path d="M0 0v6l4-3z" />
                </svg>
              </div>
            </div>
          </div>
          <div className="flex h-[10px] w-[1152px] items-center bg-[#cbcbca] pl-[2px] pr-[1px] justify-between shrink-0">
            <div className="h-[6px] w-[540px] rounded-full bg-[#808280]" />
            <div className="h-[7px] w-[2px] bg-[#4a4a48]" />
          </div>
          <SheetTabs />
        </div>
        <Sidebar />
      </div>
      <StatusBar />
    </div>
  );
};

export default App;
